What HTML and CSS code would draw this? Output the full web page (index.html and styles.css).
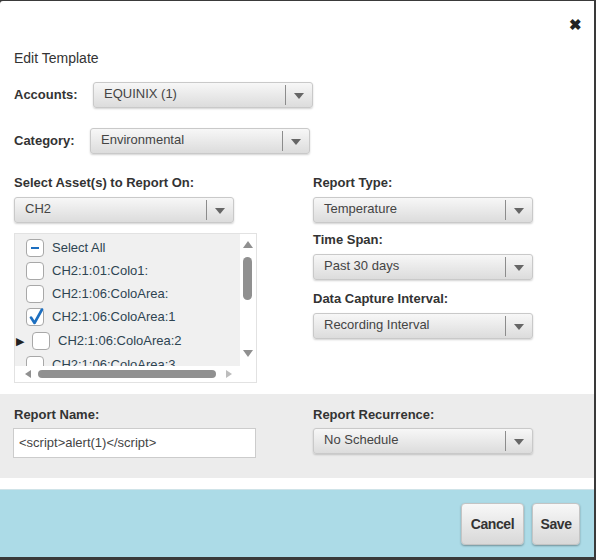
FILE: index.html
```html
<!DOCTYPE html>
<html>
<head>
<meta charset="utf-8">
<link rel="stylesheet" href="styles.css">
</head>
<body>
<div class="dialog">
  <div class="topbar"><span class="close">&#10006;</span></div>
  <div class="title">Edit Template</div>
  <div class="row-inline accounts">
    <span class="label">Accounts:</span>
    <div class="select w220"><span class="val">EQUINIX (1)</span><span class="arrow"></span></div>
  </div>
  <div class="row-inline category">
    <span class="label">Category:</span>
    <div class="select w220"><span class="val">Environmental</span><span class="arrow"></span></div>
  </div>
  <div class="cols">
    <div class="col left">
      <div class="label">Select Asset(s) to Report On:</div>
      <div class="select w220"><span class="val">CH2</span><span class="arrow"></span></div>
      <div class="tree">
        <div class="tree-body">
          <div class="items">
            <div class="item"><span class="cb ind"></span><span>Select All</span></div>
            <div class="item"><span class="cb"></span><span>CH2:1:01:Colo1:</span></div>
            <div class="item"><span class="cb"></span><span>CH2:1:06:ColoArea:</span></div>
            <div class="item"><span class="cb checked"><svg viewBox="0 0 18 18" width="18" height="18"><path d="M4 9.5 L7.5 15 L15 1.5" fill="none" stroke="#1d6fc0" stroke-width="2.6" stroke-linejoin="round" stroke-linecap="round"/></svg></span><span>CH2:1:06:ColoArea:1</span></div>
            <div class="item sub"><span class="exp">&#9654;</span><span class="cb"></span><span>CH2:1:06:ColoArea:2</span></div>
            <div class="item"><span class="cb"></span><span>CH2:1:06:ColoArea:3</span></div>
          </div>
          <div class="vscroll">
            <span class="tri up"></span>
            <span class="vthumb"></span>
            <span class="tri down"></span>
          </div>
        </div>
        <div class="hscroll">
          <span class="tri lft"></span>
          <span class="hthumb"></span>
          <span class="tri rgt"></span>
        </div>
      </div>
    </div>
    <div class="col right">
      <div class="label">Report Type:</div>
      <div class="select w220"><span class="val">Temperature</span><span class="arrow"></span></div>
      <div class="label mt">Time Span:</div>
      <div class="select w220"><span class="val">Past 30 days</span><span class="arrow"></span></div>
      <div class="label mt2">Data Capture Interval:</div>
      <div class="select w220"><span class="val">Recording Interval</span><span class="arrow"></span></div>
    </div>
  </div>
  <div class="graybox">
    <div class="col left">
      <div class="label">Report Name:</div>
      <div class="input">&lt;script&gt;alert(1)&lt;/script&gt;</div>
    </div>
    <div class="col right">
      <div class="label">Report Recurrence:</div>
      <div class="select w220"><span class="val">No Schedule</span><span class="arrow"></span></div>
    </div>
  </div>
  <div class="footer">
    <button class="btn cancel">Cancel</button>
    <button class="btn save">Save</button>
  </div>
</div>
</body>
</html>
```

FILE: styles.css
```css
html, body {
  margin: 0;
  padding: 0;
  background: #3a3a3a;
  height: 560px;
  overflow: hidden;
}
body {
  font-family: "Liberation Sans", Arial, sans-serif;
  font-size: 13px;
  color: #333;
}
.dialog {
  margin-top: 1px;
  width: 594px;
  height: 556px;
  background: #fff;
  border-top-left-radius: 3px;
  display: flex;
  flex-direction: column;
}
.topbar {
  height: 46px;
  display: flex;
  justify-content: flex-end;
  align-items: flex-start;
}
.close {
  font-size: 15px;
  font-weight: bold;
  color: #222;
  margin: 16px 12px 0 0;
  line-height: 16px;
}
.title {
  padding-left: 14px;
  font-size: 14px;
  line-height: 18px;
  height: 18px;
  margin-top: 2px;
  margin-bottom: -2px;
  color: #333;
}
.label {
  font-weight: bold;
  color: #333;
  line-height: 16px;
}
.row-inline {
  display: flex;
  align-items: center;
  padding-left: 14px;
}
.accounts { margin-top: 17px; }
.accounts .label { width: 79px; }
.category { margin-top: 20px; }
.category .label { width: 76px; }
.select {
  box-sizing: border-box;
  height: 26px;
  border: 1px solid #c9c9c9;
  border-radius: 3px;
  background: linear-gradient(#f7f7f7, #dcdcdc);
  box-shadow: 0 1px 2px rgba(0,0,0,0.18);
  display: flex;
  align-items: center;
  position: relative;
}
.w220 { width: 220px; }
.select .val {
  flex: 1;
  padding-left: 10px;
  color: #444;
  line-height: 16px;
  margin-top: -3px;
}
.select .arrow {
  width: 26px;
  height: 20px;
  border-left: 1px solid #8c8c8c;
  position: relative;
}
.select .arrow::after {
  content: "";
  position: absolute;
  left: 8px;
  top: 8px;
  border-left: 5px solid transparent;
  border-right: 5px solid transparent;
  border-top: 6px solid #666;
}
.cols {
  display: flex;
  margin-top: 21px;
}
.col.left {
  width: 299px;
  padding-left: 14px;
  box-sizing: border-box;
}
.col.right {
  padding-left: 14px;
}
.cols .label { margin-bottom: 6px; }
.label.mt { margin-top: 9px; }
.label.mt2 { margin-top: 11px; }
.tree {
  margin-top: 10px;
  width: 243px;
  height: 150px;
  box-sizing: border-box;
  border: 1px solid #e2e2e2;
  display: flex;
  flex-direction: column;
}
.tree-body {
  display: flex;
  height: 132px;
}
.items {
  flex: 1;
  background: #f0f0f0;
  overflow: hidden;
  padding: 2px 0 0 11px;
}
.item {
  display: flex;
  align-items: center;
  height: 23px;
  color: #2e4452;
  white-space: nowrap;
  font-size: 13px;
}
.cb {
  box-sizing: border-box;
  width: 18px;
  height: 18px;
  border: 1px solid #a8a8a8;
  border-radius: 4px;
  background: #fff;
  margin-right: 8px;
  flex: none;
  position: relative;
}
.cb.ind::after {
  content: "";
  position: absolute;
  left: 4px;
  top: 7px;
  width: 8px;
  height: 2px;
  background: #1d6fc0;
}
.cb.checked svg {
  position: absolute;
  left: 0;
  top: -1px;
}
.item.sub {
  margin-left: -10px;
  height: 25px;
}
.exp {
  font-size: 11px;
  color: #222;
  width: 16px;
  line-height: 12px;
}
.vscroll {
  width: 16px;
  background: #fff;
  position: relative;
}
.tri {
  position: absolute;
  width: 0;
  height: 0;
}
.tri.up {
  left: 3px;
  top: 7px;
  border-left: 5px solid transparent;
  border-right: 5px solid transparent;
  border-bottom: 7px solid #909090;
}
.tri.down {
  left: 3px;
  bottom: 9px;
  border-left: 5px solid transparent;
  border-right: 5px solid transparent;
  border-top: 7px solid #909090;
}
.vthumb {
  position: absolute;
  left: 3px;
  top: 23px;
  width: 9px;
  height: 43px;
  background: #909090;
  border-radius: 5px;
}
.hscroll {
  height: 16px;
  position: relative;
  background: #fff;
}
.tri.lft {
  left: 10px;
  top: 4px;
  border-top: 4px solid transparent;
  border-bottom: 4px solid transparent;
  border-right: 6px solid #909090;
}
.tri.rgt {
  left: 211px;
  top: 4px;
  border-top: 4px solid transparent;
  border-bottom: 4px solid transparent;
  border-left: 6px solid #bdbdbd;
}
.hthumb {
  position: absolute;
  left: 23px;
  top: 4px;
  width: 178px;
  height: 8px;
  background: #909090;
  border-radius: 4px;
}
.graybox {
  margin-top: 11px;
  height: 84px;
  background: #ececec;
  display: flex;
  padding-top: 13px;
  box-sizing: border-box;
}
.graybox .label { margin-bottom: 5px; }
.graybox .col.right { padding-left: 14px; }
.input {
  box-sizing: border-box;
  width: 243px;
  height: 30px;
  margin-left: -1px;
  border: 1px solid #cccccc;
  background: #fff;
  padding: 6px 0 0 5px;
  color: #444;
  line-height: 16px;
}
.graybox .select { margin-top: 0; }
.footer {
  margin-top: 11px;
  flex: 1;
  background: #acdbe7;
  border-top: 1px solid #cfe3e8;
  display: flex;
  justify-content: flex-end;
  align-items: flex-start;
  padding: 13px 14px 0 0;
  gap: 8px;
}
.btn {
  font-family: "Liberation Sans", Arial, sans-serif;
  font-size: 14px;
  font-weight: bold;
  letter-spacing: -0.4px;
  color: #333;
  height: 42px;
  padding: 0;
  border: 1px solid #c4c4c4;
  border-radius: 4px;
  background: linear-gradient(#f8f8f8, #d8d8d8);
  box-shadow: 0 1px 2px rgba(0,0,0,0.35);
}
.btn.cancel { width: 63px; }
.btn.save { width: 48px; }
```
